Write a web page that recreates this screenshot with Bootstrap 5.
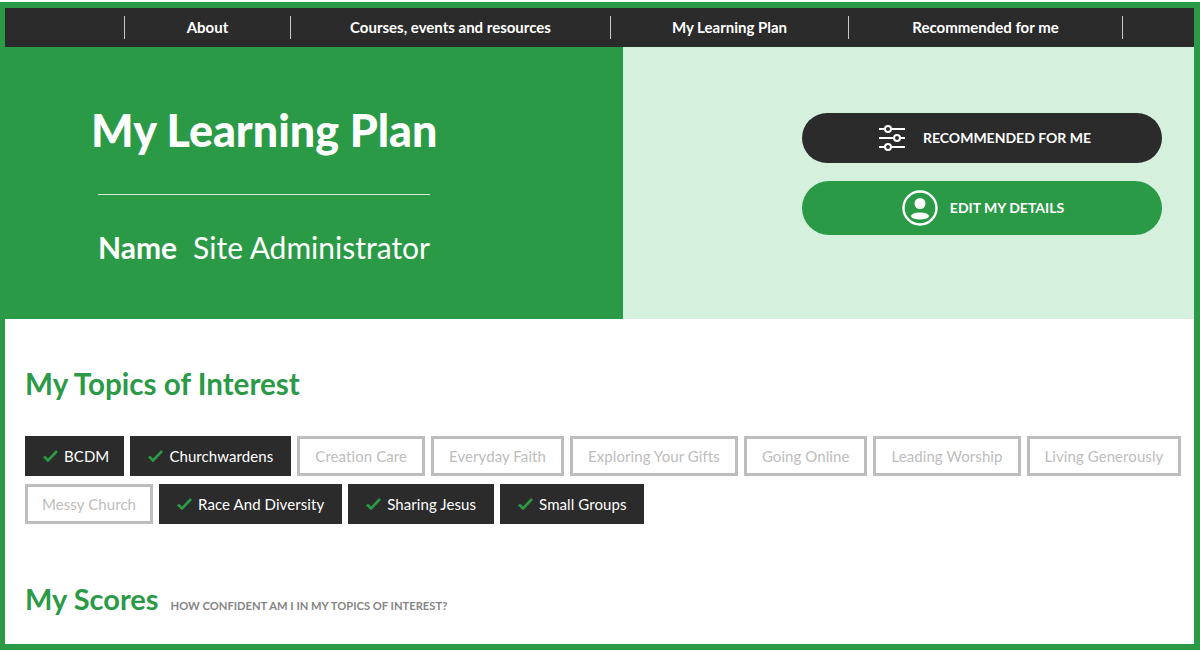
<!DOCTYPE html>
<html lang="en">
<head>
    <meta charset="UTF-8">
    <meta name="viewport" content="width=device-width, initial-scale=1.0">
    <title>My Learning Plan</title>
    <link href="https://cdn.jsdelivr.net/npm/bootstrap@5.3.0/dist/css/bootstrap.min.css" rel="stylesheet">
    <style>
        body {
            font-family: "Lato", "Liberation Sans", sans-serif;
            background: #fff;
            padding-top: 2px;
            overflow: hidden;
        }

        .page-frame {
            height: 648px;
            border: solid #2b9a47;
            border-width: 6px 6px 6px 5px;
            overflow: hidden;
        }

        .top-menu {
            height: 39px;
            padding-left: 119px;
            background: #2b2b2b;
        }

        .top-menu .nav-item {
            height: 23px;
            display: flex;
            align-items: center;
            justify-content: center;
            border-left: 1px solid #c8c8c8;
        }

        .top-menu .nav-item:last-child {
            border-right: 1px solid #c8c8c8;
        }

        .top-menu .nav-link {
            padding: 0;
            color: #fff;
            font-size: 15px;
            font-weight: 700;
            margin-top: -1px;
        }

        .menu-about { width: 166px; }
        .menu-courses { width: 320px; }
        .menu-plan { width: 238px; }
        .menu-rec { width: 275px; }

        .hero {
            height: 272px;
        }

        .hero-left {
            width: 618px;
            padding: 56px 0 0 86px;
            background: #2b9a47;
            color: #fff;
        }

        .hero-inner {
            width: 345px;
            text-align: center;
        }

        .hero-inner h1 {
            margin: 0;
            font-size: 44.8px;
            line-height: 54px;
            font-weight: 900;
            white-space: nowrap;
        }

        .hero-inner hr {
            width: 332px;
            margin: 37px auto 34px 7px;
            border-top: 1px solid #fff;
            opacity: .8;
        }

        .hero-name {
            margin-left: 7px;
            width: 332px;
            font-size: 30px;
            line-height: 36px;
            white-space: nowrap;
            display: flex;
            justify-content: space-between;
        }

        .hero-right {
            background: #d6f0de;
            padding: 66px 32px 0 0;
        }

        .pill-btn {
            width: 360px;
            border-radius: 27px;
            border: 0;
            color: #fff;
            font-size: 14px;
            font-weight: 700;
            text-transform: uppercase;
            padding-top: 0;
            padding-bottom: 1px;
        }

        .pill-dark { height: 50px; background: #2b2b2b; padding-left: 17px; gap: 17px; }
        .pill-green { height: 54px; background: #2b9a47; margin-top: 18px; padding-left: 14px; gap: 12px; }
        .pill-dark:hover { background: #2b2b2b; color: #fff; }
        .pill-green:hover { background: #2b9a47; color: #fff; }

        .topics {
            padding: 0 12px 0 20px;
        }

        .green-title {
            margin: 0;
            color: #2b9a47;
            font-size: 29px;
            font-weight: 700;
        }

        .topics-title {
            font-size: 29.6px;
            line-height: 40px;
            padding-top: 45px;
            margin-bottom: 32px;
        }

        .topic-tags {
            column-gap: 6px;
            row-gap: 8px;
        }

        .topic-tag {
            height: 40px;
            padding: 0 15px;
            border-radius: 0;
            display: flex;
            align-items: center;
            font-size: 15px;
            letter-spacing: .08px;
        }

        .topic-tag:first-child {
            padding-right: 12px;
        }

        .topic-tag:nth-child(9) {
            padding: 0 14px;
        }

        .tag-on {
            background: #2b2b2b;
            border: 3px solid #2b2b2b;
            color: #fff;
            gap: 6px;
        }

        .tag-on:hover { background: #2b2b2b; color: #fff; }

        .tag-off {
            background: #fff;
            border: 3px solid #bdbdbd;
            color: #bdbdbd;
        }

        .tag-off:hover { color: #bdbdbd; border-color: #bdbdbd; }

        .scores-row {
            margin-top: 58px;
            gap: 12px;
        }

        .scores-note {
            color: #858585;
            font-size: 11.2px;
            font-weight: 700;
            text-transform: uppercase;
        }
    </style>
</head>
<body>
    <div class="page-frame">
        <ul class="nav top-menu align-items-center flex-nowrap">
            <li class="nav-item menu-about"><a class="nav-link" href="#">About</a></li>
            <li class="nav-item menu-courses"><a class="nav-link" href="#">Courses, events and resources</a></li>
            <li class="nav-item menu-plan"><a class="nav-link" href="#">My Learning Plan</a></li>
            <li class="nav-item menu-rec"><a class="nav-link" href="#">Recommended for me</a></li>
        </ul>

        <div class="hero d-flex">
            <div class="hero-left">
                <div class="hero-inner">
                    <h1>My Learning Plan</h1>
                    <hr>
                    <div class="hero-name"><strong>Name</strong><span>Site Administrator</span></div>
                </div>
            </div>
            <div class="hero-right flex-grow-1 d-flex flex-column align-items-end">
                <a href="#" class="btn pill-btn pill-dark d-flex align-items-center justify-content-center">
                    <svg width="28" height="28" viewBox="0 0 28 28" fill="none" stroke="#fff" stroke-width="2">
                        <path d="M1 5h6M13 5h14M1 14h15M22 14h5M1 23h6M13 23h14"/>
                        <circle cx="10" cy="5" r="3"/>
                        <circle cx="19" cy="14" r="3"/>
                        <circle cx="10" cy="23" r="3"/>
                    </svg>
                    Recommended for me
                </a>
                <a href="#" class="btn pill-btn pill-green d-flex align-items-center justify-content-center">
                    <svg width="36" height="36" viewBox="0 0 36 36" fill="none">
                        <circle cx="18" cy="18" r="16.5" stroke="#fff" stroke-width="2.4"/>
                        <circle cx="18" cy="13.5" r="5.5" fill="#fff"/>
                        <ellipse cx="18" cy="26" rx="9" ry="3.6" fill="#fff"/>
                    </svg>
                    Edit my details
                </a>
            </div>
        </div>

        <div class="topics">
            <h2 class="green-title topics-title">My Topics of Interest</h2>
            <div id="topic-tags" class="topic-tags d-flex flex-wrap"></div>
            <div class="scores-row d-flex align-items-baseline">
                <h2 class="green-title">My Scores</h2>
                <span class="scores-note">How confident am I in my topics of interest?</span>
            </div>
        </div>
    </div>

    <script>
        const topics = [
            ["BCDM", true], ["Churchwardens", true], ["Creation Care", false], ["Everyday Faith", false],
            ["Exploring Your Gifts", false], ["Going Online", false], ["Leading Worship", false], ["Living Generously", false],
            ["Messy Church", false], ["Race And Diversity", true], ["Sharing Jesus", true], ["Small Groups", true]
        ];
        const tick = '<svg width="15" height="12" viewBox="0 0 15 12" fill="none" stroke="#2b9a47" stroke-width="2.6"><path d="M1 6.5l4 4L14 1"/></svg>';
        const box = document.getElementById("topic-tags");
        topics.forEach(([name, on]) => {
            const tag = document.createElement("a");
            tag.href = "#";
            tag.className = "btn topic-tag " + (on ? "tag-on" : "tag-off");
            tag.innerHTML = (on ? tick : "") + "<span>" + name + "</span>";
            box.appendChild(tag);
        });
    </script>

    <script src="https://cdn.jsdelivr.net/npm/bootstrap@5.3.0/dist/js/bootstrap.bundle.min.js"></script>
</body>
</html>
